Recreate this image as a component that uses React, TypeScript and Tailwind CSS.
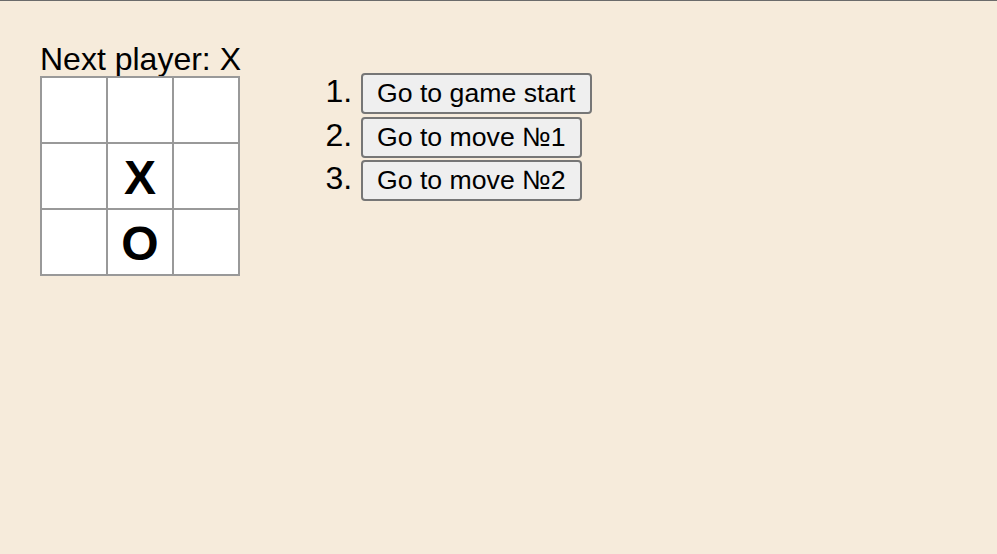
import React from "react";

const squares: (string | null)[] = [null, null, null, null, "X", null, null, "O", null];
const moves = ["Go to game start", "Go to move №1", "Go to move №2"];

function Square({ value }: { value: string | null }) {
  return (
    <button className="box-border w-[68px] h-[68px] -mr-[2px] -mt-[2px] border-2 border-[#999999] bg-white p-0 text-center text-[48px] font-bold leading-[68px] text-black">
      {value}
    </button>
  );
}

export default function App() {
  return (
    <div
      className="min-h-[554px] border-t border-[#6b6b6b] bg-[#f6ebdb] p-[40px] text-black leading-[normal]"
      style={{ fontFamily: '"Liberation Sans", Arial, sans-serif' }}
    >
      <div className="flex flex-row">
        <div>
          <div className="text-[32px] leading-[normal]">Next player: X</div>
          {[0, 1, 2].map((r) => (
            <div key={r} className="flex">
              {[0, 1, 2].map((c) => (
                <Square key={c} value={squares[r * 3 + c]} />
              ))}
            </div>
          ))}
        </div>
        <div className="ml-[40px]">
          <ol className="mt-[32px] list-decimal pl-[80px] text-[32px] leading-[normal]">
            {moves.map((m, i) => (
              <li key={i} className="mb-[2.5px]">
                <button className="rounded-[4px] border-2 border-[#767676] bg-[#efefef] px-[14px] py-[3px] text-[26.667px] leading-[normal] text-black">
                  {m}
                </button>
              </li>
            ))}
          </ol>
        </div>
      </div>
    </div>
  );
}
